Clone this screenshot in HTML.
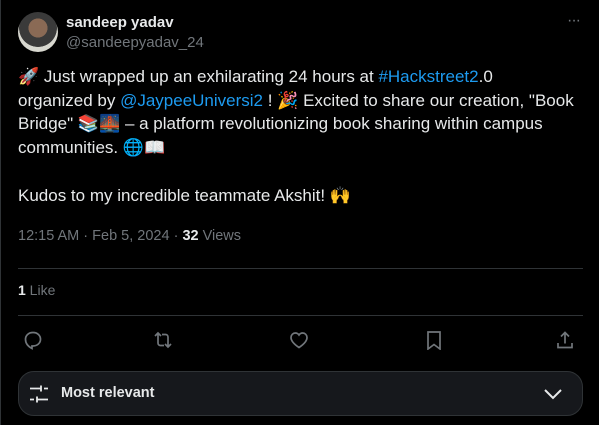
<!DOCTYPE html>
<html><head><meta charset="utf-8"><style>
*{margin:0;padding:0;box-sizing:border-box}
body{width:599px;height:425px;background:#000;color:#e7e9ea;font-family:"Liberation Sans",sans-serif;position:relative;overflow:hidden;border-left:1px solid #2f3336}
.a{position:absolute}
.av{left:17px;top:12px;width:40px;height:40px;border-radius:50%;background:radial-gradient(circle at 50% 40%,#8a6a55 0 30%,#3a3a3a 31% 60%,#d8d8d0 61%)}
.name{left:65px;top:14px;font-weight:bold;font-size:15px}
.handle{left:65px;top:34px;color:#71767b;font-size:15px}
.txt{left:17px;top:65px;width:580px;font-size:17px;line-height:23.7px;white-space:nowrap}
.b{color:#1d9bf0}
.meta{left:17px;top:228px;color:#71767b;font-size:14.5px}
.hr{left:17px;width:565px;height:1px;background:#2f3336}
.like{left:17px;top:282px;font-size:14px;color:#71767b}
.box{left:17px;top:371px;width:565px;height:45px;border:1px solid #2f3336;border-radius:16px;background:#16181c}
svg{position:absolute}
</style></head><body>
<div class="a av"></div>
<div class="a name">sandeep yadav</div>
<div class="a handle">@sandeepyadav_24</div>
<div class="a" style="left:566px;top:12px;color:#71767b;font-size:16px;letter-spacing:-1px">···</div>
<div class="a txt">🚀 Just wrapped up an exhilarating 24 hours at <span class="b">#Hackstreet2</span>.0<br>organized by <span class="b">@JaypeeUniversi2</span> ! 🎉 Excited to share our creation, "Book<br>Bridge" 📚🌉 – a platform revolutionizing book sharing within campus<br>communities. 🌐📖<br><br>Kudos to my incredible teammate Akshit! 🙌</div>
<div class="a meta">12:15 AM · Feb 5, 2024 · <b style="color:#e7e9ea">32</b> Views</div>
<div class="a hr" style="top:268px"></div>
<div class="a like"><b style="color:#e7e9ea">1</b> Like</div>
<div class="a hr" style="top:315px"></div>
<svg style="left:22px;top:330px" width="20" height="20" viewBox="0 0 20 20" fill="none" stroke="#71767b" stroke-width="1.7"><path d="M10 2.5c4.5 0 7.5 3 7.5 6.8 0 4-3.5 6.7-7.5 6.7H9v2.5C5 16.5 2.5 13.2 2.5 9.3 2.5 5.5 5.5 2.5 10 2.5z"/></svg>
<svg style="left:151px;top:330px" width="22" height="20" viewBox="0 0 22 20" fill="none" stroke="#71767b" stroke-width="1.7"><path d="M3 6l3-3 3 3M6 3v10c0 1.5 1 2.5 2.5 2.5H12M19 14l-3 3-3-3M16 17V7c0-1.5-1-2.5-2.5-2.5H10"/></svg>
<svg style="left:288px;top:330px" width="20" height="20" viewBox="0 0 20 20" fill="none" stroke="#71767b" stroke-width="1.7"><path d="M10 17.5C4 13.5 2 10.5 2 7.5 2 5 4 3 6.3 3c1.6 0 2.9.8 3.7 2 .8-1.2 2.1-2 3.7-2C16 3 18 5 18 7.5c0 3-2 6-8 10z"/></svg>
<svg style="left:424px;top:330px" width="18" height="20" viewBox="0 0 18 20" fill="none" stroke="#71767b" stroke-width="1.7"><path d="M3 2h12v17l-6-4.5L3 19z"/></svg>
<svg style="left:554px;top:330px" width="20" height="20" viewBox="0 0 20 20" fill="none" stroke="#71767b" stroke-width="1.7"><path d="M10 2.5v11M6 6.5l4-4 4 4M3 13v4.5h14V13"/></svg>
<div class="a box"></div>
<svg style="left:28px;top:384px" width="20" height="20" viewBox="0 0 20 20" fill="none" stroke="#e7e9ea" stroke-width="1.8"><path d="M1 4.5h11M15 4.5h4M12 1.5v6M1 15.5h4M8 15.5h11M8 12.5v6"/></svg>
<div class="a" style="left:60px;top:385px;font-weight:bold;font-size:14.5px">Most relevant</div>
<svg style="left:541px;top:386px" width="22" height="16" viewBox="0 0 22 16" fill="none" stroke="#e7e9ea" stroke-width="2"><path d="M3 4l8 8 8-8"/></svg>
</body></html>
